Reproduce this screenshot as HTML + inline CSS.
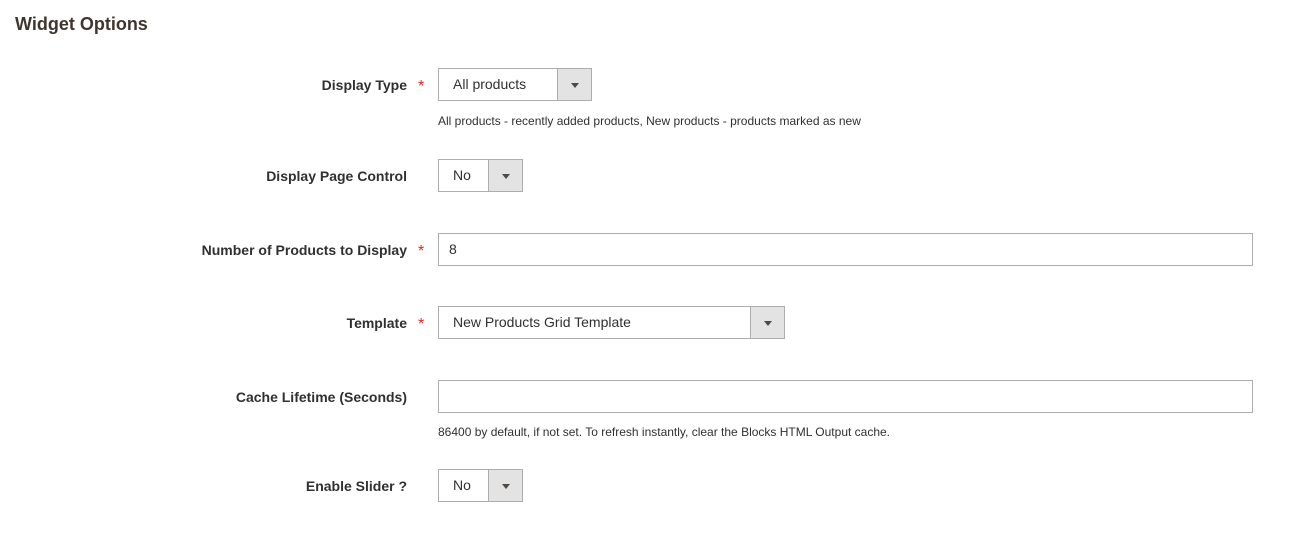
<!DOCTYPE html>
<html><head><style>
body{margin:0;width:1303px;height:548px;background:#fff;font-family:"Liberation Sans",sans-serif;color:#303030;position:relative;overflow:hidden}
h2{position:absolute;left:15px;top:14px;margin:0;font-size:18px;font-weight:bold;color:#41362f}
.l{position:absolute;right:896px;font-size:14px;font-weight:bold;color:#303030;white-space:nowrap}
.s{position:absolute;left:418px;color:#e22626;font-size:16px}
.b{position:absolute;left:438px;height:31px;border:1px solid #adadad;background:#fff;font-size:14px;line-height:31px}
.b span{padding-left:14px}
.ar{position:absolute;right:0;top:0;width:33px;height:31px;background:#e3e3e3;border-left:1px solid #adadad}
.ar:after{content:"";position:absolute;left:13px;top:14px;border-left:4px solid transparent;border-right:4px solid transparent;border-top:5px solid #514943}
.n{position:absolute;left:438px;font-size:12px;color:#303030}
</style></head><body>
<h2>Widget Options</h2>

<div class="l" style="top:77px">Display Type</div><div class="s" style="top:78px">*</div>
<div class="b" style="top:68px;width:152px"><span>All products</span><div class="ar"></div></div>
<div class="n" style="top:114px">All products - recently added products, New products - products marked as new</div>

<div class="l" style="top:168px">Display Page Control</div>
<div class="b" style="top:159px;width:83px"><span>No</span><div class="ar"></div></div>

<div class="l" style="top:242px">Number of Products to Display</div><div class="s" style="top:243px">*</div>
<div class="b" style="top:233px;width:813px"><span style="padding-left:10px">8</span></div>

<div class="l" style="top:315px">Template</div><div class="s" style="top:316px">*</div>
<div class="b" style="top:306px;width:345px"><span>New Products Grid Template</span><div class="ar"></div></div>

<div class="l" style="top:389px">Cache Lifetime (Seconds)</div>
<div class="b" style="top:380px;width:813px"></div>
<div class="n" style="top:425px">86400 by default, if not set. To refresh instantly, clear the Blocks HTML Output cache.</div>

<div class="l" style="top:478px">Enable Slider ?</div>
<div class="b" style="top:469px;width:83px"><span>No</span><div class="ar"></div></div>
</body></html>
